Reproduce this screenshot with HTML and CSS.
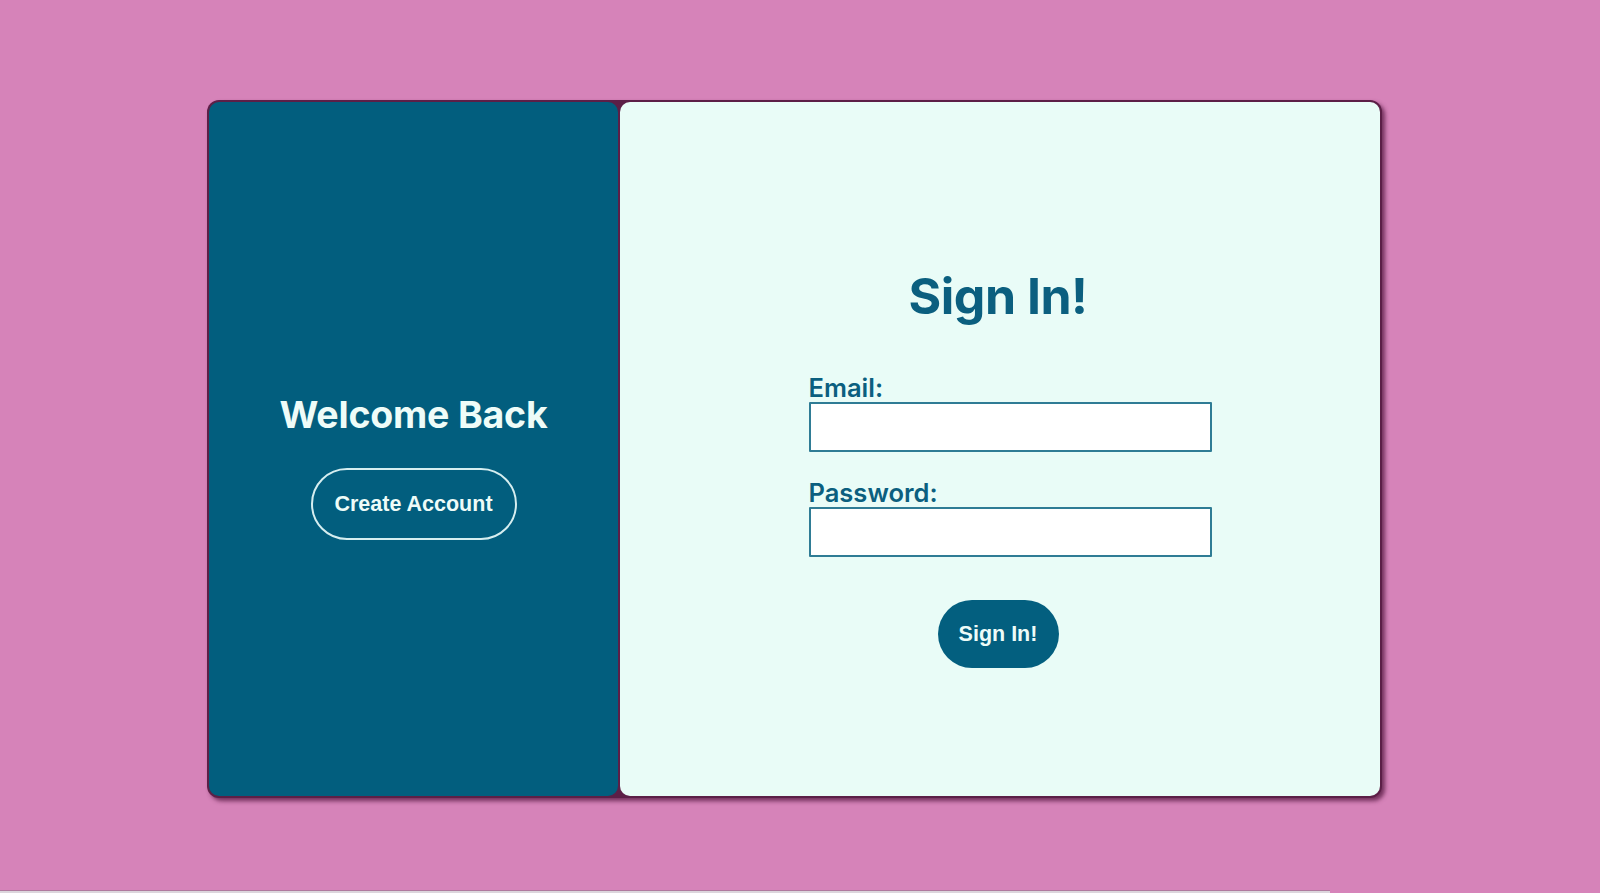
FILE: index.html
```html
<!DOCTYPE html>
<html lang="en">
<head>
<meta charset="utf-8">
<title>Sign In</title>
<link rel="stylesheet" href="styles.css">
</head>
<body>
<main class="page">
  <div class="card">
    <section class="panel panel-left">
      <h2 class="welcome">Welcome Back</h2>
      <button class="btn-outline" type="button">Create Account</button>
    </section>
    <section class="panel panel-right">
      <h1 class="title">Sign In!</h1>
      <form class="form">
        <label class="label" for="email">Email:</label>
        <input class="input" id="email" type="email">
        <label class="label label-pw" for="pw">Password:</label>
        <input class="input" id="pw" type="password">
      </form>
      <button class="btn-solid" type="button">Sign In!</button>
    </section>
  </div>
</main>
<div class="bottom-strip"></div>
</body>
</html>
```
FILE: styles.css
```css
* { box-sizing: border-box; }
html, body { margin: 0; height: 100%; }
body {
  background: #d683b9;
  font-family: "Inter", "Liberation Sans", sans-serif;
  overflow: hidden;
  position: relative;
}
.page {
  padding: 100px 0 0 207px;
}
.card {
  display: flex;
  width: 1175px;
  height: 698px;
  background: #5c1f47;
  border-radius: 12px;
  padding: 2px;
  gap: 2px;
  box-shadow: 3px 3px 4px rgba(80, 20, 60, 0.75);
}
.panel {
  border-radius: 10px;
  display: flex;
  flex-direction: column;
  align-items: center;
  justify-content: center;
}
.panel-left {
  width: 409px;
  background: #025e7e;
  padding-top: 33.5px;
}
.panel-right {
  flex: 1;
  background: #e9fcf7;
  padding-top: 36px;
}
.welcome {
  margin: 0 0 31.5px 0;
  color: #eefcf8;
  font-size: 37.5px;
  font-weight: 700;
  letter-spacing: -0.2px;
}
.btn-outline {
  width: 206px;
  height: 72px;
  border: 2px solid #d6eef0;
  border-radius: 36px;
  background: transparent;
  color: #eefcf8;
  font-family: "Liberation Sans", Arial, sans-serif;
  font-weight: 700;
  font-size: 21.5px;
}
.title {
  margin: 0 0 48px -4px;
  color: #0b5f7f;
  font-size: 50px;
  font-weight: 700;
  letter-spacing: -0.5px;
}
.form {
  display: flex;
  flex-direction: column;
  width: 403px;
  margin-left: 20px;
}
.label {
  color: #0b5f7f;
  font-size: 25.5px;
  font-weight: 600;
  line-height: 28px;
  margin-bottom: 0;
}
.label-pw { margin-top: 27.5px; }
.input {
  height: 50px;
  border: 2px solid #2f7c95;
  background: #ffffff;
  border-radius: 1px;
}
.btn-solid {
  margin-top: 43px;
  width: 121px;
  height: 68px;
  border: none;
  border-radius: 34px;
  background: #035f7f;
  color: #eefcf8;
  font-family: "Liberation Sans", Arial, sans-serif;
  font-weight: 700;
  font-size: 21.5px;
  margin-left: -4px;
}
.bottom-strip {
  position: absolute;
  left: 0;
  bottom: 0;
  width: 1330px;
  height: 3px;
  background: #dcd6dc;
  border-top: 1px solid #b07a9e;
}
```
